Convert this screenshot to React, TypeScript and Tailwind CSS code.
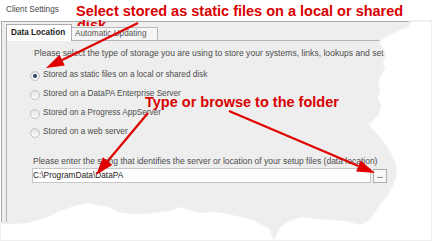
import React from 'react';

const RED_TEXT = '#d80000';
const RED_ARROW = '#e00000';

const options = [
    'Stored as static files on a local or shared disk',
    'Stored on a DataPA Enterprise Server',
    'Stored on a Progress AppServer',
    'Stored on a web server',
];

// torn paper edge along the right and bottom of the screenshot
const tornEdge = [
    [410, 21], [408, 26], [400, 29], [394, 32], [388, 35], [381, 39], [379, 44], [383, 49],
    [385, 55], [382, 62], [384, 68], [380, 75], [377, 82], [379, 90], [377, 98], [380, 106],
    [378, 114], [372, 120], [367, 124], [372, 130], [378, 136], [385, 145], [391, 155],
    [395, 165], [396, 175], [392, 185], [387, 195], [380, 203], [374, 212], [368, 220],
    [360, 224], [345, 220], [330, 219], [315, 218], [300, 216], [288, 221], [280, 226],
    [274, 238], [270, 228], [262, 224], [252, 219], [240, 216], [228, 213], [215, 211],
    [200, 212], [190, 209], [180, 206], [170, 210], [160, 211], [145, 213], [130, 213],
    [118, 211], [108, 206], [98, 204], [88, 202], [78, 204], [68, 207], [58, 211],
    [48, 216], [38, 219], [28, 222], [15, 223], [0, 223], [0, 241], [432, 241], [432, 21],
];

// tail -> tip, head drawn as a filled triangle
const arrows = [
    { from: [138, 23], to: [46, 68] },
    { from: [148, 113], to: [96, 175] },
    { from: [229, 111], to: [375, 173] },
];

function Arrow({ from, to }: { from: number[]; to: number[] }) {
    const dx = to[0] - from[0];
    const dy = to[1] - from[1];
    const len = Math.hypot(dx, dy);
    const ux = dx / len;
    const uy = dy / len;
    const bx = to[0] - ux * 18;
    const by = to[1] - uy * 18;
    const nx = uy * 6;
    const ny = -ux * 6;
    return (
        <g>
            <line x1={from[0]} y1={from[1]} x2={bx} y2={by} stroke={RED_ARROW} strokeWidth={2.2} />
            <polygon
                points={`${to[0]},${to[1]} ${bx + nx},${by + ny} ${bx - nx},${by - ny}`}
                fill={RED_ARROW}
            />
        </g>
    );
}

function Radio({ checked }: { checked?: boolean }) {
    return (
        <span className="w-[10px] h-[10px] shrink-0 rounded-full border border-[#c2c2c2] bg-linear-to-b from-[#e2e2e2] to-[#fbfbfb] flex items-center justify-center">
            {checked && <span className="w-[4px] h-[4px] rounded-full bg-[#2d4566]" />}
        </span>
    );
}

export default function App() {
    return (
        <div className="relative w-[432px] h-[241px] overflow-hidden bg-white font-['Liberation_Sans',Arial,sans-serif] text-[8.2px]">
            {/* Title */}
            <div className="h-[21px] pl-[6px] flex items-center text-[#474747]">Client Settings</div>

            {/* Window body */}
            <div className="ml-[1px] h-[220px] border-t border-l border-[#a9a9a9] bg-[#eeeeee] pl-[4px] pt-[2px]">
                {/* Tabs */}
                <div className="flex items-end h-[16px]">
                    <div className="relative z-20 -mb-px h-[17px] w-[66px] bg-white border border-b-0 border-[#acacac] pl-[4px] flex items-center font-bold text-[#1c1c1c]">
                        Data Location
                    </div>
                    <div className="relative z-20 h-[13px] w-[86px] bg-[#f6f6f6] border border-b-0 border-l-0 border-[#b9b9b9] pl-[3px] flex items-center text-[#555555]">
                        Automatic Updating
                    </div>
                </div>

                {/* Tab page */}
                <div className="h-[200px] border-t border-l border-[#b5b5b5] bg-[#eeeeee] text-[#4d4d4d] overflow-hidden">
                    <p className="mt-[7px] pl-[27px] text-[8.6px] leading-[11px] whitespace-nowrap">
                        Please select the type of storage you are using to store your systems, links, lookups and settings
                    </p>

                    <div className="mt-[7px]">
                        {options.map((label, i) => (
                            <div key={label} className="h-[19px] pl-[23px] flex items-center gap-[3px] whitespace-nowrap">
                                <Radio checked={i === 0} />
                                <span>{label}</span>
                            </div>
                        ))}
                    </div>

                    <p className="mt-[14px] pl-[26px] text-[8.5px] leading-[11px] whitespace-nowrap">
                        Please enter the string that identifies the server or location of your setup files (data location)
                    </p>

                    <div className="mt-[1px] pl-[25px] flex items-start gap-[2px]">
                        <div className="w-[339px] h-[15px] border border-[#c6c6c6] bg-white flex items-center text-[8.3px] text-[#222222]">
                            {'C:\\ProgramData\\DataPA'}
                        </div>
                        <div className="mt-px w-[14px] h-[14px] border border-[#acacac] bg-[#f8f8f8] flex items-end justify-center pb-[3px] text-[7px] leading-none font-bold text-[#333333]">
                            ...
                        </div>
                    </div>
                </div>
            </div>

            {/* Callout text */}
            <div className="absolute left-[76px] top-[4px] z-10 whitespace-nowrap font-bold text-[14.5px] leading-[15px]" style={{ color: RED_TEXT }}>
                Select stored as static files on a local or shared
            </div>
            {/* second line, mostly hidden behind the tabs */}
            <div className="absolute left-[77px] top-[20px] z-10 h-[6px] overflow-hidden whitespace-nowrap font-bold text-[14.5px] leading-[15px]" style={{ color: RED_TEXT }}>
                <div className="-mt-[2px]">disk</div>
            </div>

            {/* Torn edge */}
            <svg className="absolute inset-0 z-[25] pointer-events-none" width={432} height={241}>
                <polygon
                    points={tornEdge.map((p) => p.join(',')).join(' ')}
                    fill="#ffffff"
                    stroke="#efefef"
                    strokeWidth={2}
                />
            </svg>

            <div className="absolute left-[145px] top-[95px] z-30 whitespace-nowrap font-bold text-[14.5px] leading-[15px]" style={{ color: RED_TEXT }}>
                Type or browse to the folder
            </div>

            <svg className="absolute inset-0 z-30 pointer-events-none" width={432} height={241}>
                {arrows.map((a, i) => (
                    <Arrow key={i} from={a.from} to={a.to} />
                ))}
            </svg>
        </div>
    );
}
